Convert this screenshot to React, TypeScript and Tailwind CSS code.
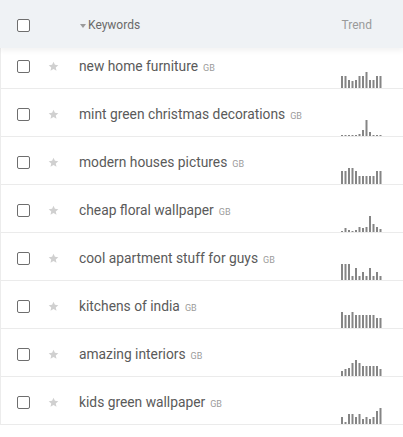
import React from 'react'

const rows: { keyword: string; trend: number[] }[] = [
  { keyword: 'new home furniture', trend: [12, 12, 8, 7, 8, 12, 12, 16, 8, 8, 12, 12] },
  { keyword: 'mint green christmas decorations', trend: [1, 1, 1, 1, 1, 2, 6, 16, 4, 1, 1, 1] },
  { keyword: 'modern houses pictures', trend: [13, 13, 16, 16, 13, 8, 8, 8, 8, 8, 13, 13] },
  { keyword: 'cheap floral wallpaper', trend: [1, 4, 2, 1, 2, 5, 4, 5, 16, 8, 5, 3] },
  { keyword: 'cool apartment stuff for guys', trend: [16, 16, 16, 4, 12, 4, 8, 4, 12, 4, 8, 4] },
  { keyword: 'kitchens of india', trend: [16, 13, 13, 16, 13, 13, 13, 13, 13, 13, 10, 10] },
  { keyword: 'amazing interiors', trend: [5, 7, 8, 13, 16, 13, 10, 10, 10, 10, 10, 7] },
  { keyword: 'kids green wallpaper', trend: [7, 2, 10, 10, 7, 10, 5, 7, 5, 7, 13, 16] },
]

function Checkbox() {
  return <span className="block h-[13px] w-[13px] shrink-0 rounded-[2px] border border-[#6e6e6e] bg-white" />
}

function Star() {
  return (
    <svg width="11" height="11" viewBox="0 0 24 24" className="shrink-0">
      <path
        d="M12 1.5l3.1 6.9 7.4.7-5.6 5 1.7 7.4L12 17.6l-6.6 3.9 1.7-7.4-5.6-5 7.4-.7z"
        fill="#d0d0d0"
      />
    </svg>
  )
}

function Sparkline({ values }: { values: number[] }) {
  return (
    <svg width="42" height="16" viewBox="0 0 42 16" className="shrink-0 self-end">
      {values.map((v, i) => (
        <rect key={i} x={i * 3.5} y={16 - v} width="2" height={v} fill="#858585" />
      ))}
    </svg>
  )
}

export default function App() {
  return (
    <div className="h-[437px] w-[403px] overflow-hidden bg-white font-['Roboto',sans-serif]">
      {/* Header */}
      <div className="relative z-10 flex h-12 items-center bg-[#eff2f5] pt-[2px] shadow-[0_3px_5px_rgba(0,0,0,0.05)]">
        <div className="ml-[17px]">
          <Checkbox />
        </div>
        <div className="ml-[50px] flex items-center text-[12px] text-[#6a6a6a]">
          <svg width="6" height="4" viewBox="0 0 6 4" className="mr-[2px] mt-[1px]">
            <path d="M0 0h6L3 4z" fill="#9a9a9a" />
          </svg>
          Keywords
        </div>
        <div className="ml-auto mr-[31px] text-[12px] text-[#9a9a9a]">Trend</div>
      </div>

      {/* Rows */}
      <div className="-mt-[7px] border-l border-[#ececec]">
        {rows.map((row) => (
          <div key={row.keyword} className="flex h-12 items-center border-b border-[#ebebeb] pt-[4px]">
            <div className="ml-[16px]">
              <Checkbox />
            </div>
            <div className="ml-[18px]">
              <Star />
            </div>
            <div className="ml-[20px] flex items-baseline text-[13.8px] text-[#5a5a5a]">
              {row.keyword}
              <span className="ml-[5px] text-[9px] text-[#9b9b9b]">GB</span>
            </div>
            <div className="ml-auto mr-[20px] self-end">
              <Sparkline values={row.trend} />
            </div>
          </div>
        ))}
      </div>
    </div>
  )
}
